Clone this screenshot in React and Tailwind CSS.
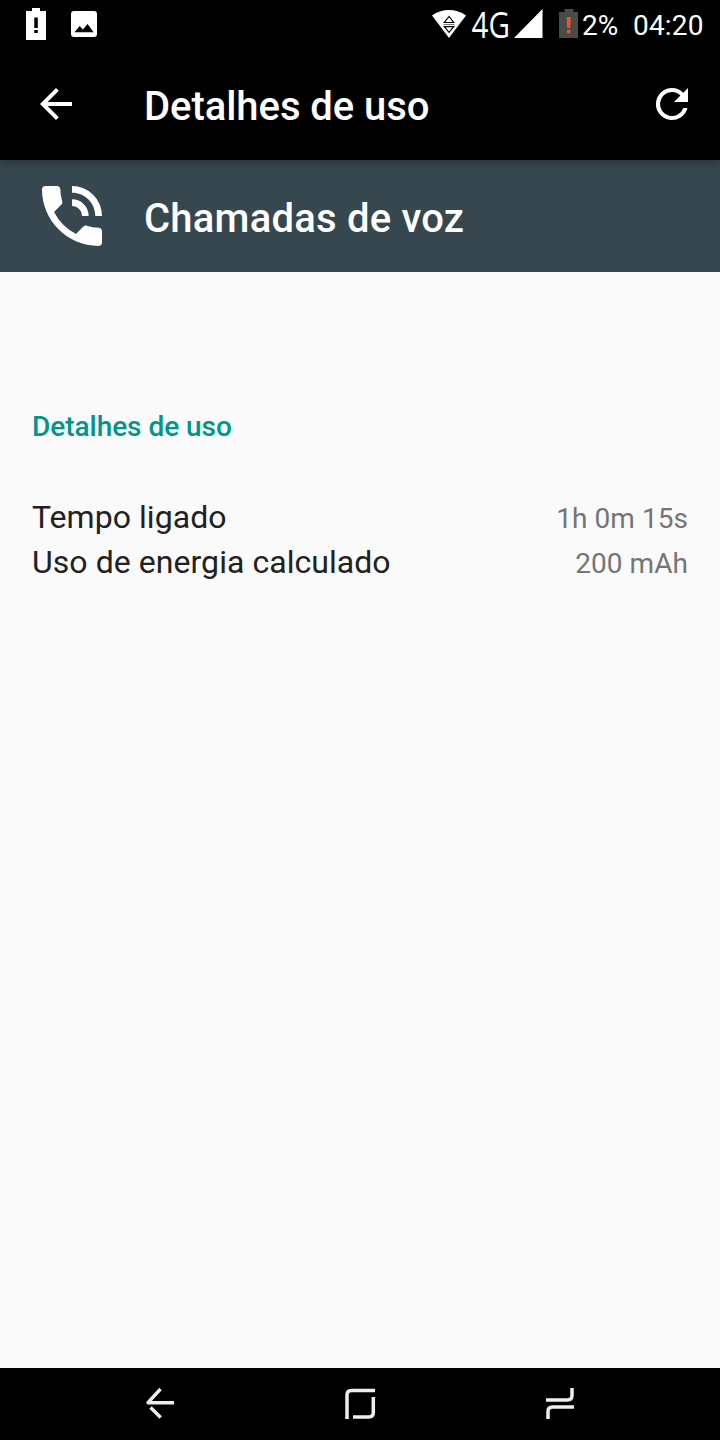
function StatusBar() {
  return (
    <div className="flex h-12 items-start bg-black text-white">
      <svg className="ml-6 h-12 w-6 shrink-0" viewBox="24 0 24 48">
        <path d="M32 8h8v3h6v29H26V11h6z" fill="#fff" />
        <path d="M34.300 17.500h3.500v10.500h-3.500zM34.300 30h3.500v3h-3.500z" fill="#000" />
      </svg>
      <svg className="ml-5 h-12 w-8 shrink-0" viewBox="68 0 32 48">
        <rect x="71" y="11" width="26" height="26" rx="3" fill="#fff" />
        <path d="M74.500 32.300l5.200-6.300 3.200 3.500 4.700-5.600 6 8.400z" fill="#000" />
      </svg>
      <div className="grow" />
      <svg className="h-12 w-[36px] shrink-0" viewBox="431 0 36 48">
        <path d="M449 38L432 15.500Q439.500 10 449 10T466 15.500z" fill="#fff" />
        <path d="M449 16.500l-4.700 6h9.400z M444.300 26.600h9.400L449 32.300z" fill="#fff" stroke="#000" strokeWidth="1.200" />
        <path d="M443.500 24.500h11" stroke="#777" strokeWidth="1" />
      </svg>
      <svg className="h-12 w-[45px] shrink-0 overflow-visible" viewBox="467 0 45 48">
        <text x="471.500" y="38" fontSize="36.500" fill="#fff" fontFamily="'Open Sans', sans-serif" transform="translate(471.500 0) scale(0.810 1) translate(-471.500 0)">4G</text>
      </svg>
      <svg className="h-12 w-[70px] shrink-0" viewBox="512 0 70 48">
        <path d="M542.500 9v29H514z" fill="#fff" />
        <path d="M564.500 9h9v3h4.500v26h-19V12h5.500z" fill="#4a4a4a" />
        <path d="M566.600 17h4.200l-.6 11h-3z" fill="#f4511e" />
        <circle cx="568.700" cy="31.500" r="1.900" fill="#f4511e" />
      </svg>
      <span className="w-[51px] whitespace-nowrap text-[28px] leading-[51px]">2%</span>
      <span className="w-[87px] whitespace-nowrap text-[28px] leading-[51px] tracking-[0.2px]">04:20</span>
    </div>
  );
}

function AppBar() {
  return (
    <header className="relative z-10 flex h-28 items-center bg-black pr-6 pl-8 text-white shadow-[0_2px_8px_rgba(0,0,0,0.35)]">
      <svg className="size-12 shrink-0" viewBox="0 0 24 24" fill="currentColor">
        <path d="M20 11H7.830l5.590-5.590L12 4l-8 8 8 8 1.410-1.410L7.830 13H20v-2z" />
      </svg>
      <h1 className="ml-16 grow pt-1.5 text-[40px] leading-[48px] font-medium tracking-[-0.05px]">Detalhes de uso</h1>
      <svg className="size-12 shrink-0" viewBox="0 0 24 24" fill="currentColor">
        <path d="M17.650 6.350A7.958 7.958 0 0 0 12 4a8 8 0 1 0 7.730 10h-2.080A6 6 0 1 1 12 6c1.660 0 3.140.69 4.220 1.780L13 11h7V4z" />
      </svg>
    </header>
  );
}

function Row({ label, value }) {
  return (
    <div className="flex h-[45px] items-center justify-between">
      <dt className="text-[32px] leading-[45px] tracking-[0.05px] text-[#212121]">{label}</dt>
      <dd className="pt-[3px] text-[28px] leading-[42px] tracking-[0.05px] text-[#757575]">{value}</dd>
    </div>
  );
}

function NavBar() {
  return (
    <nav className="flex h-[72px] items-center justify-between bg-black px-[136px]">
      <svg className="h-[72px] w-12" viewBox="136 1368 48 72" fill="none" stroke="#eee" strokeWidth="3.400">
        <path d="M160.500 1389l-12.500 13.700H174M150.500 1407.500l10.200 10" strokeLinejoin="round" />
      </svg>
      <svg className="h-[72px] w-12" viewBox="336 1368 48 72" fill="none" stroke="#eee" strokeWidth="3.500">
        <path d="M347 1419v-24q0-4.500 4.500-4.500H375M373.300 1397v15.500q0 4.500-4.500 4.500H353" />
      </svg>
      <svg className="h-[72px] w-12" viewBox="536 1368 48 72" fill="none" stroke="#eee" strokeWidth="3.500">
        <path d="M546 1400h21.500q4.500 0 4.500-4.500V1388M574 1407h-21.500q-4.500 0-4.500 4.500V1419" />
      </svg>
    </nav>
  );
}

export default function App() {
  return (
    <div className="flex h-[1440px] w-[720px] flex-col overflow-hidden bg-[#fafafa] font-[Roboto,sans-serif]">
      <StatusBar />
      <AppBar />
      <section className="flex h-28 items-center bg-[#37474f] pl-8 text-white">
        <svg className="size-20 shrink-0" viewBox="0 0 24 24" fill="currentColor">
          <path d="M20 15.500c-1.250 0-2.450-.2-3.570-.57-.35-.11-.74-.03-1.020.24l-2.200 2.200a15.045 15.045 0 0 1-6.590-6.580l2.200-2.210c.28-.27.36-.66.25-1.010A11.360 11.360 0 0 1 8.500 4c0-.55-.45-1-1-1H4c-.55 0-1 .45-1 1 0 9.390 7.610 17 17 17 .55 0 1-.45 1-1v-3.500c0-.55-.45-1-1-1zM19 12h2a9 9 0 0 0-9-9v2c3.870 0 7 3.130 7 7zm-4 0h2c0-2.760-2.240-5-5-5v2c1.660 0 3 1.340 3 3z" />
        </svg>
        <h2 className="ml-8 pt-1.5 text-[40px] leading-[48px] font-medium tracking-[0.22px]">Chamadas de voz</h2>
      </section>
      <main className="grow px-8 pt-[134px]">
        <h3 className="text-[28px] leading-[42px] font-medium tracking-[-0.04px] text-[#009688]">Detalhes de uso</h3>
        <dl className="pt-[47px]">
          <Row label="Tempo ligado" value="1h 0m 15s" />
          <Row label="Uso de energia calculado" value="200 mAh" />
        </dl>
      </main>
      <NavBar />
    </div>
  );
}
